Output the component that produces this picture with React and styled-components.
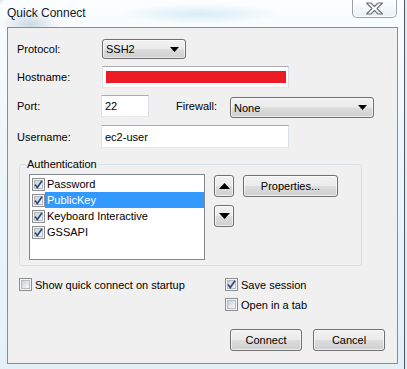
import styled, { createGlobalStyle } from 'styled-components'

const GlobalStyle = createGlobalStyle`
  html, body {
    margin: 0;
    padding: 0;
    background: #dfeaf3;
  }
  body {
    font-family: "Liberation Sans", Arial, sans-serif;
    font-size: 11px;
    color: #000;
  }
`

const CheckMark = () => (
  <svg width="9" height="9" viewBox="0 0 9 9">
    <path d="M1 4.5 L3.3 7.5 L8 0.8" fill="none" stroke="#2c4a8a" strokeWidth="1.7" />
  </svg>
)

const Arrow = ({ down }) => (
  <svg width="11" height="6" viewBox="0 0 11 6">
    <path d={down ? 'M0 0 H11 L5.5 6 Z' : 'M0 6 H11 L5.5 0 Z'} fill="#000" />
  </svg>
)

const DropArrow = () => (
  <svg width="9" height="5" viewBox="0 0 9 5">
    <path d="M0 0 H9 L4.5 5 Z" fill="#000" />
  </svg>
)

const Checkbox = ({ checked }) => (
  <Box>
    <BoxInner $checked={checked}>{checked && <CheckMark />}</BoxInner>
  </Box>
)

const App = () => {
  const methods = [
    { name: 'Password', checked: true },
    { name: 'PublicKey', checked: true, selected: true },
    { name: 'Keyboard Interactive', checked: true },
    { name: 'GSSAPI', checked: true },
  ]

  return (
    <>
      <GlobalStyle />
      <Frame>
        <TitleBar>
          <Title>Quick Connect</Title>
          <CloseButton>
            <svg width="19" height="13" viewBox="0 0 19 13">
              <path
                d="M1.5 1 H6 L9.5 4.5 L13 1 H17.5 L12 6.5 L17.5 12 H13 L9.5 8.5 L6 12 H1.5 L7 6.5 Z"
                fill="#fafafa"
                stroke="#69727c"
                strokeWidth="1.1"
                strokeLinejoin="round"
              />
            </svg>
          </CloseButton>
        </TitleBar>

        <Client>
          <FieldRow $top={11}>
            <Label>Protocol:</Label>
            <Select $width={84} $shift={1}>
              <span>SSH2</span>
              <DropArrow />
            </Select>
          </FieldRow>

          <FieldRow $top={7}>
            <Label>Hostname:</Label>
            <TextInput $width={187} $shift={1}>
              <Redacted />
            </TextInput>
          </FieldRow>

          <FieldRow $top={6}>
            <Label>Port:</Label>
            <TextInput $width={48}>22</TextInput>
            <Label $width={54} $gap={27}>Firewall:</Label>
            <Select $width={144} $height={21} $drop={3}>
              <span>None</span>
              <DropArrow />
            </Select>
          </FieldRow>

          <FieldRow $top={7}>
            <Label>Username:</Label>
            <TextInput $width={188} $height={23}>ec2-user</TextInput>
          </FieldRow>

          <GroupBox>
            <Legend>Authentication</Legend>
            <GroupBody>
              <ListBox>
                {methods.map((m) => (
                  <ListItem key={m.name}>
                    <Checkbox checked={m.checked} />
                    <ItemText $selected={m.selected}>{m.name}</ItemText>
                  </ListItem>
                ))}
              </ListBox>
              <ArrowColumn>
                <Button $width={20}>
                  <Arrow />
                </Button>
                <Button $width={20}>
                  <Arrow down />
                </Button>
              </ArrowColumn>
              <Button $width={95}>Properties...</Button>
            </GroupBody>
          </GroupBox>

          <BottomArea>
            <OptionsLeft>
              <CheckRow>
                <Checkbox />
                <span>Show quick connect on startup</span>
              </CheckRow>
            </OptionsLeft>
            <OptionsRight>
              <CheckRow>
                <Checkbox checked />
                <span>Save session</span>
              </CheckRow>
              <CheckRow>
                <Checkbox />
                <span>Open in a tab</span>
              </CheckRow>
              <ButtonRow>
                <Button $width={73}>Connect</Button>
                <Button $width={73}>Cancel</Button>
              </ButtonRow>
            </OptionsRight>
          </BottomArea>
        </Client>
      </Frame>
    </>
  )
}

const Frame = styled.div`
  width: 405px;
  height: 369px;
  padding-left: 7px;
  box-sizing: border-box;
  border-right: 1px solid #4c5660;
  border-top-left-radius: 6px;
  overflow: hidden;
  background:
    radial-gradient(ellipse 30px 14px at 30px 24px, rgba(120, 150, 180, 0.35), transparent),
    radial-gradient(ellipse 80px 10px at 200px 14px, rgba(180, 220, 240, 0.5), transparent),
    linear-gradient(180deg, #fbfdfe 0%, #eef6fb 40%, #e4f0f8 100%);
`

const TitleBar = styled.div`
  display: flex;
  justify-content: space-between;
  align-items: flex-start;
  height: 27px;
`

const Title = styled.div`
  font-family: "Liberation Sans", Arial, sans-serif;
  font-size: 12px;
  color: #0d1a2b;
  padding-top: 6px;
`

const CloseButton = styled.div`
  width: 45px;
  height: 18px;
  margin-right: 7px;
  box-sizing: border-box;
  display: flex;
  align-items: center;
  justify-content: center;
  border: 1px solid #9aa3ad;
  border-top: none;
  border-radius: 0 0 5px 5px;
  background: linear-gradient(180deg, rgba(255,255,255,0.5), rgba(230,238,244,0.8));
  box-shadow: inset 0 0 0 1px rgba(255,255,255,0.7);
`

const Client = styled.div`
  width: 391px;
  height: 337px;
  box-sizing: border-box;
  background: #f0f0f0;
  border: 1px solid #8a8c8e;
  display: flex;
  flex-direction: column;
`

const FieldRow = styled.div`
  display: flex;
  align-items: center;
  padding-left: 9px;
  margin-top: ${({ $top }) => $top}px;
`

const Label = styled.div`
  width: ${({ $width = 84 }) => $width}px;
  margin-left: ${({ $gap = 0 }) => $gap}px;
  flex-shrink: 0;
`

const Select = styled.div`
  width: ${({ $width }) => $width}px;
  height: ${({ $height = 20 }) => $height}px;
  margin-left: ${({ $shift = 0 }) => $shift}px;
  margin-top: ${({ $drop = 0 }) => $drop}px;
  box-sizing: border-box;
  display: flex;
  align-items: center;
  justify-content: space-between;
  padding: 0 6px 0 3px;
  border: 1px solid #707070;
  border-radius: 3px;
  background: linear-gradient(180deg, #f2f2f2 0%, #ebebeb 49%, #dddddd 51%, #cfcfcf 100%);
  box-shadow: inset 0 0 0 1px rgba(255, 255, 255, 0.6);
`

const TextInput = styled.div`
  width: ${({ $width }) => $width}px;
  height: ${({ $height = 22 }) => $height}px;
  margin-left: ${({ $shift = 0 }) => $shift}px;
  box-sizing: border-box;
  display: flex;
  align-items: center;
  padding: 0 3px;
  background: #fff;
  border: 1px solid #e3e9ef;
  border-top-color: #abadb3;
  border-left-color: #e2e3ea;
  border-right-color: #dbdfe6;
`

const Redacted = styled.div`
  flex: 1;
  height: 12px;
  margin-right: -1px;
  background: #ed1c24;
`

const GroupBox = styled.fieldset`
  margin: 10px 0 0 11px;
  width: 343px;
  box-sizing: border-box;
  padding: 4px 0 5px 9px;
  border: 1px solid #d5dfe5;
  border-radius: 3px;
`

const Legend = styled.legend`
  padding: 0 1px;
  margin-left: -3px;
  font-size: 11px;
`

const GroupBody = styled.div`
  display: flex;
  align-items: flex-start;
  gap: 9px;
`

const ListBox = styled.div`
  width: 176px;
  height: 86px;
  box-sizing: border-box;
  background: #fff;
  border: 1px solid #828790;
  padding: 1px 0 0 2px;
`

const ListItem = styled.div`
  display: flex;
  align-items: center;
  height: 16px;
`

const ItemText = styled.div`
  flex: 1;
  height: 16px;
  line-height: 16px;
  padding-left: 2px;
  background: ${({ $selected }) => ($selected ? '#3399ff' : 'transparent')};
  color: ${({ $selected }) => ($selected ? '#fff' : '#000')};
`

const Box = styled.div`
  width: 13px;
  height: 13px;
  box-sizing: border-box;
  flex-shrink: 0;
  border: 1px solid #8e8f8f;
  background: #f4f4f4;
  padding: 1px;
`

const BoxInner = styled.div`
  width: 100%;
  height: 100%;
  display: flex;
  align-items: center;
  justify-content: center;
  border: 1px solid #b8bcc2;
  box-sizing: border-box;
  background: linear-gradient(135deg, #cbcfd5 0%, #e6e8eb 60%, #f6f6f6 100%);
  svg {
    margin: -2px;
    flex-shrink: 0;
  }
`

const ArrowColumn = styled.div`
  display: flex;
  flex-direction: column;
  gap: 7px;
`

const Button = styled.div`
  width: ${({ $width }) => $width}px;
  height: 22px;
  box-sizing: border-box;
  display: flex;
  align-items: center;
  justify-content: center;
  margin-top: 1px;
  border: 1px solid #707070;
  border-radius: 3px;
  background: linear-gradient(180deg, #f2f2f2 0%, #ebebeb 49%, #dddddd 51%, #cfcfcf 100%);
  box-shadow: inset 0 0 0 1px rgba(255, 255, 255, 0.65);
`

const BottomArea = styled.div`
  display: flex;
  margin-top: 12px;
`

const OptionsLeft = styled.div`
  width: 206px;
  padding-left: 11px;
  box-sizing: border-box;
`

const OptionsRight = styled.div`
  width: 160px;
  display: flex;
  flex-direction: column;
  gap: 7px;
  padding-left: 11px;
`

const CheckRow = styled.div`
  display: flex;
  align-items: center;
  gap: 3px;
  height: 13px;
`

const ButtonRow = styled.div`
  display: flex;
  justify-content: flex-end;
  gap: 11px;
  margin-top: 10px;
  margin-left: 5px;
`

export default App
